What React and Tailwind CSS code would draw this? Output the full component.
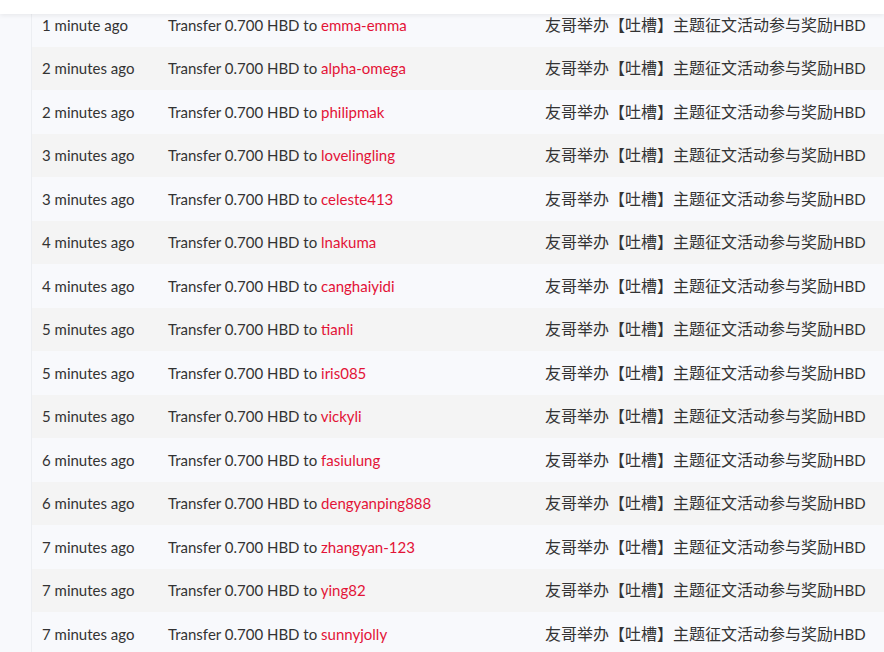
const rows = [
  ["1 minute ago", "emma-emma"],
  ["2 minutes ago", "alpha-omega"],
  ["2 minutes ago", "philipmak"],
  ["3 minutes ago", "lovelingling"],
  ["3 minutes ago", "celeste413"],
  ["4 minutes ago", "lnakuma"],
  ["4 minutes ago", "canghaiyidi"],
  ["5 minutes ago", "tianli"],
  ["5 minutes ago", "iris085"],
  ["5 minutes ago", "vickyli"],
  ["6 minutes ago", "fasiulung"],
  ["6 minutes ago", "dengyanping888"],
  ["7 minutes ago", "zhangyan-123"],
  ["7 minutes ago", "ying82"],
  ["7 minutes ago", "sunnyjolly"],
];

export default function App() {
  return (
    <div
      className="relative h-[652px] w-full overflow-hidden bg-[#f8f9fc] text-[15px] leading-normal text-[#333]"
      style={{ fontFamily: "Lato, 'Noto Sans CJK SC', sans-serif" }}
    >
      {/* fixed header strip */}
      <div className="absolute top-0 left-0 right-0 z-10 h-[14px] bg-white shadow-[0_2px_4px_rgba(0,0,0,0.06)]" />

      <div className="ml-[31px] border-l border-[#eceef2] pt-[3px]">
        {rows.map(([time, to], i) => (
          <div
            key={i}
            className={`flex h-[43.5px] items-center ${
              i % 2 === 1 ? "bg-[#f4f4f4]" : "bg-[#f8f9fc]"
            }`}
          >
            <div className="w-[136px] shrink-0 pl-[10px]">{time}</div>
            <div className="w-[377px] shrink-0">
              Transfer 0.700 HBD to{" "}
              <a href="#" className="text-[#e31337]">
                {to}
              </a>
            </div>
            <div className="whitespace-nowrap">
              <span className="text-[16px]">友哥举办【吐槽】主题征文活动参与奖励</span>HBD
            </div>
          </div>
        ))}
      </div>
    </div>
  );
}
